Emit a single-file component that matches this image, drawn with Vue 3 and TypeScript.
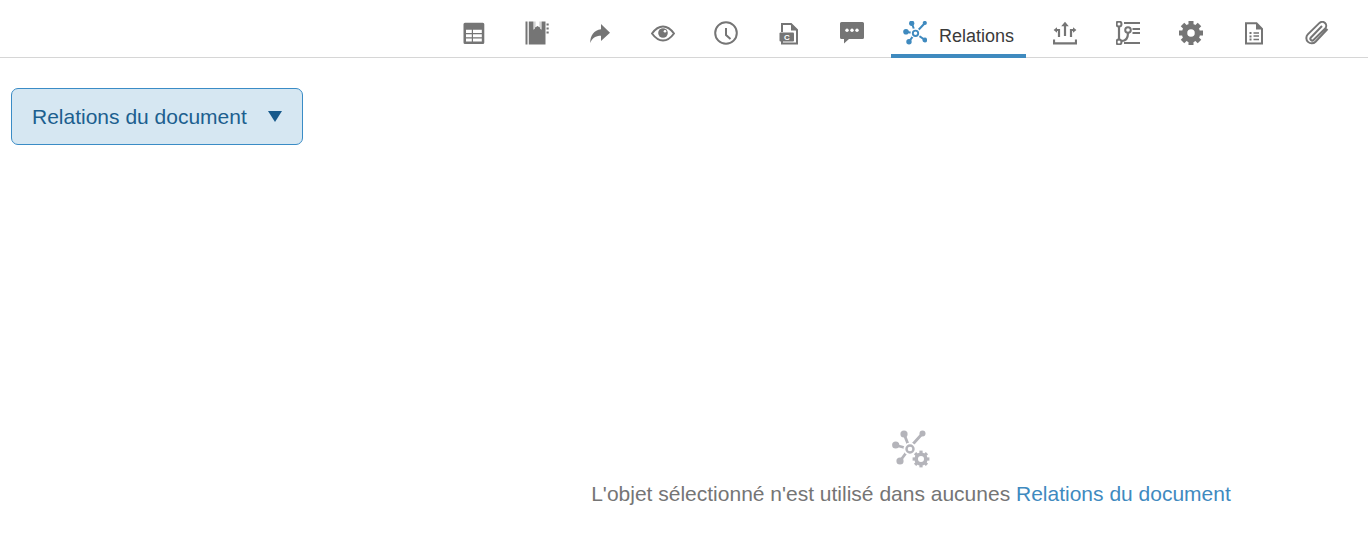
<script setup lang="ts">
const gearAngles: number[] = [0, 45, 90, 135, 180, 225, 270, 315]
</script>

<template>
  <div class="page">
    <header class="tabs">
      <div class="tab" title="Table">
        <svg class="ic" viewBox="0 0 24 24"><path fill-rule="evenodd" d="M3 1.700h17.800a1.500 1.500 0 0 1 1.500 1.500v18.300a1.500 1.500 0 0 1-1.500 1.500H3a1.500 1.500 0 0 1-1.500-1.500V3.200A1.500 1.500 0 0 1 3 1.700zM4 8.800v3.200h5.800V8.800zm7 0v3.200h8.800V8.800zM4 13.200v3h5.800v-3zm7 0v3h8.800v-3zM4 17.400v3.200h5.800v-3.200zm7 0v3.200h8.800v-3.200z" /></svg>
      </div>
      <div class="tab">
        <svg class="ic" viewBox="0 0 24 24"><rect x="0.500" y="0.500" width="2" height="23" /><path d="M3.800 0.500h16.700v23H3.800z" /><path d="M8.500 0h8v8.800l-1.200-1V0h-.5v6.500L12.500 5l-2.300 1.500V0h-.5v7.800l-1.200 1z" fill="#fff" /><rect x="21.500" y="2.500" width="2.200" height="2" /><rect x="21.500" y="6.500" width="2.200" height="2" /><rect x="21.500" y="10.500" width="2.200" height="2" /></svg>
      </div>
      <div class="tab">
        <svg class="ic" viewBox="0 0 24 24"><path d="M13 3l9 8.800-9 8.200v-5.200C7.500 14.800 4.300 17 2.200 22 2 15 6 9 13 8.200z" /></svg>
      </div>
      <div class="tab">
        <svg class="ic" viewBox="0 0 24 24"><path class="ln" d="M1 12.500C5 7 9 5.500 12 5.500s7 1.500 11 7c-4 5.500-8 7-11 7s-7-1.500-11-7z" /><circle cx="12" cy="12" r="4.800" /><circle cx="14" cy="10.200" r="1.300" fill="#fff" /></svg>
      </div>
      <div class="tab">
        <svg class="ic" viewBox="0 0 24 24"><circle class="ln" cx="12" cy="12" r="10.800" /><path class="ln" d="M12 7v7l4.500 4" /></svg>
      </div>
      <div class="tab">
        <svg class="ic" viewBox="0 0 24 24"><path class="ln" d="M5 11V3h9l6 6v13.500H5V20" /><path d="M14 2.500v7h7z" /><rect x="2.500" y="11.500" width="14.500" height="9" rx="1" /><text class="c" x="9.800" y="19">C</text></svg>
      </div>
      <div class="tab">
        <svg class="ic" viewBox="0 0 24 24"><path d="M1.500 1h21A1.500 1.500 0 0 1 24 2.500v14a1.500 1.500 0 0 1-1.500 1.500H9l-5 4.500V18H1.500A1.500 1.500 0 0 1 0 16.500v-14A1.500 1.500 0 0 1 1.500 1z" /><circle cx="7" cy="9.300" r="1.700" fill="#fff" /><circle cx="12" cy="9.300" r="1.700" fill="#fff" /><circle cx="17" cy="9.300" r="1.700" fill="#fff" /></svg>
      </div>
      <div class="tab active">
        <svg class="ic blue" viewBox="0 0 24 24"><path class="ln" d="M8.700 2l3 8M22 2l-8.500 9M3 10.700l8 1.500M6 20.700l5.500-7.500M22 19l-8.500-5.800" /><circle cx="12.500" cy="12.300" r="5" fill="#fff" /><circle cx="12.500" cy="12.300" r="2.700" fill="#fff" stroke="#3f8abf" stroke-width="1.900" /><circle cx="8.700" cy="2.300" r="2.600" /><circle cx="21.800" cy="2" r="2.100" /><circle cx="3" cy="10.700" r="2.800" /><circle cx="6" cy="20.700" r="2.700" /><circle cx="21.800" cy="19" r="2.400" /></svg>
        <span class="tab-label">Relations</span>
      </div>
      <div class="tab">
        <svg class="ic" viewBox="0 0 24 24"><path class="ln thick" d="M1 18.500v3.800h22v-3.800M12 3.500V15M6 16V9H3M18 16V9h3" /><path d="M12 .8l3.800 4.400H8.200zM.6 9l3.400-2.800v5.600zM23.400 9 20 6.200v5.600z" /></svg>
      </div>
      <div class="tab">
        <svg class="ic" viewBox="0 0 24 24"><circle class="ln" cx="3" cy="3" r="2.500" /><circle class="ln" cx="3" cy="21" r="2.500" /><circle class="ln" cx="12" cy="9" r="2.800" /><path class="ln thick" d="M3 5.500v13M5.500 20c3.500 0 6.500-2 6.500-8M8 2h16M16.500 8H24M16.500 12H24M8 22h16" /></svg>
      </div>
      <div class="tab">
        <svg class="ic" viewBox="0 0 24 24"><circle cx="12" cy="12" r="6.500" fill="none" stroke="#757575" stroke-width="5.500" /><rect v-for="a in gearAngles" :key="a" x="9.500" y="0" width="5" height="5" :transform="`rotate(${a} 12 12)`" /></svg>
      </div>
      <div class="tab">
        <svg class="ic" viewBox="0 0 24 24"><path class="ln" d="M4 2.300h10.500l5.500 5.500v14.700H4z" /><path d="M14 2v6.500h6.500z" /><path class="ln thin" d="M11.500 12H17M11.500 15H17M11.500 18.500H17" /><rect x="7.500" y="11" width="2" height="2" /><rect x="7.500" y="14.500" width="2" height="2" /><rect x="7.500" y="17.500" width="2" height="2" /></svg>
      </div>
      <div class="tab">
        <svg class="ic" viewBox="0 0 24 24"><path class="ln" d="M22.500 8 10.500 20.700a5.300 5.300 0 0 1-7.700-7.300L14.500 1.900a4 4 0 0 1 5.700 5.600L8.500 19a1.800 1.800 0 0 1-2.600-2.500L17 5" /></svg>
      </div>
    </header>

    <main class="body">
      <aside class="side">
        <button class="picker" type="button">
          <span>Relations du document</span>
          <span class="caret"></span>
        </button>
      </aside>
      <section class="empty">
        <svg class="empty-ic" viewBox="0 0 38 38">
          <g fill="#b4b4ba">
            <path d="M12 4l4 10M30 4l-9 10M3 15l11 3M8 31l6-8" fill="none" stroke="#b4b4ba" stroke-width="2.800" />
            <circle cx="18" cy="19" r="6.500" fill="#fff" />
            <circle cx="18" cy="19" r="3.500" fill="#fff" stroke="#b4b4ba" stroke-width="2.400" />
            <circle cx="12" cy="4" r="3.600" />
            <circle cx="30.500" cy="3.500" r="3" />
            <circle cx="3.700" cy="15" r="3.600" />
            <circle cx="8" cy="31" r="3.600" />
            <circle cx="29" cy="29" r="4.800" fill="none" stroke="#b4b4ba" stroke-width="3.600" />
            <rect v-for="a in gearAngles" :key="a" x="27.400" y="20.600" width="3.200" height="3.200" :transform="`rotate(${a} 29 29)`" />
          </g>
        </svg>
        <p class="msg">L'objet sélectionné n'est utilisé dans aucunes <a class="link">Relations du document</a></p>
      </section>
    </main>
  </div>
</template>

<style>
html, body { margin: 0; background: #fff; }
</style>

<style scoped>
.page {
  height: 553px;
  overflow: hidden;
  font-family: "Liberation Sans", Arial, sans-serif;
  background: #fff;
}
.tabs {
  display: flex;
  justify-content: flex-end;
  gap: 15px;
  height: 57px;
  padding-right: 27px;
  border-bottom: 1px solid #d6d6d6;
}
.tab {
  display: flex;
  align-items: flex-start;
  box-sizing: border-box;
  justify-content: center;
  width: 48px;
  height: 58px;
  padding-top: 21px;
}
.tab.active {
  width: 135px;
  justify-content: flex-start;
  gap: 12px;
  padding-left: 12px;
  border-bottom: 4px solid #3f8abf;
}
.tab-label {
  font-size: 18px;
  line-height: 30px;
  color: #3a3a3a;
}
.ic {
  width: 24px;
  height: 24px;
  flex: none;
  fill: #757575;
  color: #757575;
}
.ic.blue {
  fill: #3f8abf;
  color: #3f8abf;
}
.ln {
  fill: none;
  stroke: currentColor;
  stroke-width: 2;
}
.ln.thin {
  stroke-width: 1.600;
}
.ln.thick {
  stroke-width: 2.200;
}
.c {
  font-family: "Liberation Sans", Arial, sans-serif;
  font-size: 8px;
  font-weight: 700;
  text-anchor: middle;
  fill: #fff;
}
.body {
  display: flex;
}
.side {
  width: 454px;
  flex: none;
  box-sizing: border-box;
  padding: 30px 0 0 11px;
}
.picker {
  display: flex;
  align-items: center;
  justify-content: space-between;
  box-sizing: border-box;
  width: 292px;
  height: 57px;
  padding: 0 20px;
  border: 1px solid #3a8cc6;
  border-radius: 7px;
  background: #d6e7f2;
  color: #1c5f8f;
  font: 21px "Liberation Sans", Arial, sans-serif;
}
.caret {
  width: 0;
  height: 0;
  border-left: 7.500px solid transparent;
  border-right: 7.500px solid transparent;
  border-top: 11px solid #175a8c;
}
.empty {
  flex: 1;
  display: flex;
  flex-direction: column;
  align-items: center;
  padding-top: 372px;
}
.empty-ic {
  width: 38px;
  height: 38px;
}
.msg {
  margin: 14px 0 0;
  font-size: 21px;
  line-height: 24px;
  color: #757575;
  white-space: nowrap;
}
.link {
  color: #3f8abf;
}
</style>
